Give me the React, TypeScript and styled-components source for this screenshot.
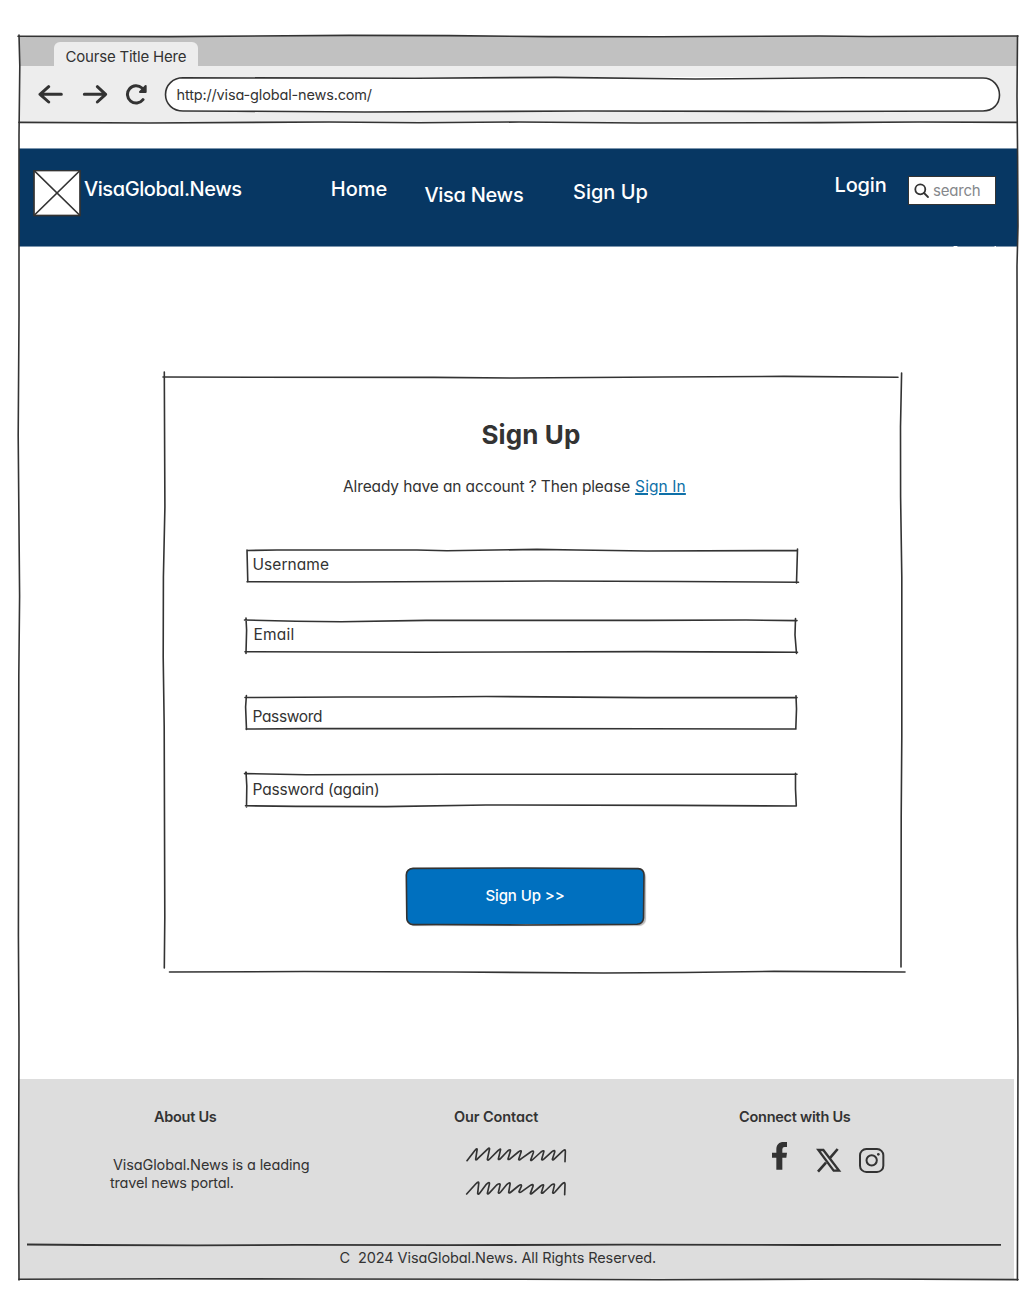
import React from "react";
import styled, { createGlobalStyle } from "styled-components";

const ink = "#333333";

const GlobalStyle = createGlobalStyle`
  * { box-sizing: border-box; }
  body {
    margin: 0;
    background: #ffffff;
    color: ${ink};
    font-family: Inter, "Liberation Sans", sans-serif;
    font-feature-settings: "cv11";
  }
`;

const Page = styled.div`
  width: 1029px;
  height: 1302px;
  padding: 36px 0 0 19px;
  overflow: hidden;
`;

const BrowserWindow = styled.div`
  position: relative;
  width: 999px;
  height: 1244px;
  display: flex;
  flex-direction: column;
`;

/* Hand-drawn outline laid over the box it belongs to. */
const Outline = styled.svg`
  position: absolute;
  inset: 0;
  width: 100%;
  height: 100%;
  overflow: visible;
  pointer-events: none;
  fill: none;
  stroke: ${ink};
  stroke-width: 1.6;
  stroke-linecap: round;
`;

const Text = styled.span<{ $size: number; $weight?: number; $track?: number }>`
  display: block;
  white-space: pre;
  line-height: 20px;
  font-size: ${(p) => p.$size}px;
  font-weight: ${(p) => p.$weight ?? 400};
  letter-spacing: ${(p) => p.$track ?? 0}px;
`;

const TabStrip = styled.div`
  height: 30px;
  padding-left: 35px;
  display: flex;
  align-items: flex-end;
  background: #c1c1c1;
`;

const Tab = styled.div`
  width: 144px;
  height: 24px;
  padding: 4.5px 0 0 11.5px;
  border-radius: 6px 6px 0 0;
  background: #ededed;
`;

const Toolbar = styled.div`
  height: 57px;
  padding: 11px 17px 0 19px;
  display: grid;
  grid-template-columns: 44px 41px 42px 835px;
  background: #ededed;
`;

const ToolIcon = styled.svg`
  width: 26px;
  height: 21px;
  margin-top: 7px;
  fill: none;
  stroke: ${ink};
  stroke-width: 9;
  stroke-linecap: round;
  stroke-linejoin: round;
`;

const AddressBar = styled.div`
  position: relative;
  height: 35px;
  padding: 7.5px 0 0 11.5px;
  border-radius: 18px;
  background: #ffffff;
`;

const Nav = styled.nav`
  height: 99px;
  margin-top: 25px;
  padding-left: 14px;
  display: grid;
  grid-template-columns: 51px 246.8px 93.7px 148.5px 261.5px 73.5px 88px;
  align-items: start;
  border: solid #7c95ad;
  border-width: 1px 0;
  background: #073763;
  color: #ffffff;
`;

const NavLink = styled.div<{ $drop: number }>`
  padding-top: ${(p) => p.$drop}px;
`;

const LogoBox = styled.svg`
  width: 48px;
  height: 47px;
  margin-top: 20.5px;
  fill: #ffffff;
  stroke: ${ink};
  stroke-width: 1.7;
`;

const SearchBox = styled.div`
  position: relative;
  height: 29px;
  margin-top: 27px;
  padding: 4px 0 0 5px;
  display: flex;
  gap: 3px;
  border: 1.5px solid ${ink};
  background: #ffffff;
  color: #85878b;
`;

const SearchIcon = styled.svg`
  width: 16px;
  height: 16px;
  margin-top: 2px;
  fill: none;
  stroke: ${ink};
  stroke-width: 1.8;
  stroke-linecap: round;
`;

const Main = styled.main`
  height: 832px;
  padding: 130px 0 0 145px;
`;

const Card = styled.form`
  position: relative;
  width: 738px;
  height: 595px;
  padding-top: 48px;
  display: flex;
  flex-direction: column;
  align-items: flex-start;
`;

const Title = styled.div`
  margin-left: 317.5px;
`;

const Prompt = styled.div`
  display: flex;
  margin: 32px 0 0 179px;
`;

const TextLink = styled.a`
  display: block;
  margin-left: 5px;
  color: #0e70a8;
  text-decoration: underline;
  text-decoration-thickness: 1.5px;
  text-underline-offset: 1px;
`;

const Field = styled.div<{ $gap: number; $indent: number; $drop: number; $inset: number }>`
  position: relative;
  width: 550px;
  height: 32px;
  margin: ${(p) => p.$gap}px 0 0 ${(p) => p.$indent}px;
  padding: ${(p) => p.$drop}px 0 0 ${(p) => p.$inset}px;
`;

const SubmitButton = styled.div`
  position: relative;
  width: 238px;
  height: 56px;
  margin: 62px 0 0 242px;
  padding-top: 18px;
  display: flex;
  justify-content: center;
  border-radius: 7px;
  background: #0070bf;
  box-shadow: 2px 2px 1px #b9b9b9;
  color: #ffffff;
`;

const Footer = styled.footer`
  width: 995px;
  height: 201px;
  background: #dddddd;
`;

const FooterColumns = styled.div`
  height: 165px;
  padding: 28px 0 0 91px;
  display: grid;
  grid-template-columns: 344px 285px 1fr;
`;

const FooterColumn = styled.section<{ $headIndent?: number }>`
  & > :first-child {
    margin-left: ${(p) => p.$headIndent ?? 0}px;
  }
`;

const About = styled.div`
  margin-top: 29px;

  & > span {
    line-height: 18px;
  }
  & > :first-child {
    margin-left: 3px;
  }
`;

const Scribbles = styled.div`
  display: grid;
  gap: 16px;
  margin: 18px 0 0 11px;
`;

const Scribble = styled.svg`
  display: block;
  width: 103px;
  height: 18px;
  fill: none;
  stroke: ${ink};
  stroke-width: 5;
  stroke-linejoin: round;
  stroke-linecap: round;
`;

const Socials = styled.div`
  display: flex;
  align-items: flex-start;
  margin: 13px 0 0 31px;
`;

const SocialIcon = styled.svg<{ $w: number; $h: number; $left?: number; $top?: number }>`
  width: ${(p) => p.$w}px;
  height: ${(p) => p.$h}px;
  margin: ${(p) => p.$top ?? 0}px 0 0 ${(p) => p.$left ?? 0}px;
  fill: none;
  stroke: ${ink};
  stroke-width: 6;
`;

const Rule = styled.svg`
  display: block;
  width: 974px;
  height: 2px;
  margin-left: 8px;
  overflow: visible;
  fill: none;
  stroke: ${ink};
  stroke-width: 1.8;
`;

const Copyright = styled.div`
  margin: 2px 0 0 320.5px;
`;

const fields = [
  { label: "Username", gap: 53, indent: 83, drop: 5, inset: 5.5, track: 0.05, path: "M0 .5L30 0H170L200 .8L290 -.6L330 0L400 1L550 .5M550.5 -1L549.5 33M551.5 32.3L430 31.5L300 31L100 32L0 31.8M.8 32L0 0" },
  { label: "Email", gap: 38, indent: 82, drop: 5, inset: 7.5, track: 0.2, path: "M-1.5 0L50 1.2L95 1.8L180 .4H400L500 0L551 .6M549.5 -1.5L549 15L550.5 33.5M551.5 32.3L400 31.6L180 32.2L-1 31.8M0 33.5L.6 10L0 -2" },
  { label: "Password", gap: 45, indent: 82, drop: 9.5, inset: 6.5, track: -0.35, path: "M-1 .5L100 0H180L240 -.5L400 .6L551 .6M550 -1.2L550.5 12L549.8 32M550 32L400 31.7L60 31.6L0 32M.5 32.5L-.4 10L.4 -1.5" },
  { label: "Password (again)", gap: 45, indent: 82, drop: 6, inset: 6.5, track: -0.15, path: "M-1.5 -.4L60 .8L200 .2H551M549.5 -.8L549.5 15L550.3 32M550.3 32L430 31.4L240 31L140 32.6L50 32.4L-.5 31.8M.5 33L.8 12L0 -2" },
];

export default function App() {
  return (
    <Page>
      <GlobalStyle />
      <BrowserWindow>
        <TabStrip>
          <Tab><Text $size={15} $track={-0.2}>Course Title Here</Text></Tab>
        </TabStrip>
        <Toolbar>
          <ToolIcon viewBox="24 27 78 63"><path d="M94 58H30M56 35L30 58L56 81" /></ToolIcon>
          <ToolIcon viewBox="156 27 78 63"><path d="M163 58H227M202 35L227 58L202 81" /></ToolIcon>
          <ToolIcon viewBox="279 27 78 63">
            <path d="M339 74A26 26 0 1 1 336 39" />
            <path d="M347 33V51L330 51Z" fill={ink} strokeWidth="6" />
          </ToolIcon>
          <AddressBar>
            <Text $size={14.5} $track={-0.16}>http://visa-global-news.com/</Text>
            <Outline viewBox="0 0 835 35">
              <path d="M18 .8L250 1.2L390 .4L530 2L680 .8L818 1C828 1 834.5 9 834.5 18C834.5 27 828 34 818 34L640 34.5L420 34L200 35L70 34.2L18 34C8 34 .5 27 .5 17.5C.5 8 8 .8 18 .8Z" />
            </Outline>
          </AddressBar>
        </Toolbar>
        <Nav>
          <LogoBox viewBox="0 0 48 47">
            <rect x="1" y=".5" width="46" height="45" />
            <path d="M1 .5L47 45.5M46.500 1L1.500 45" />
          </LogoBox>
          <NavLink $drop={30}><Text $size={20} $weight={500} $track={-0.43}>VisaGlobal.News</Text></NavLink>
          <NavLink $drop={30}><Text $size={20} $weight={500}>Home</Text></NavLink>
          <NavLink $drop={36}><Text $size={20} $weight={500} $track={-0.3}>Visa News</Text></NavLink>
          <NavLink $drop={33}><Text $size={20} $weight={500}>Sign Up</Text></NavLink>
          <NavLink $drop={26}><Text $size={20} $weight={500} $track={-0.15}>Login</Text></NavLink>
          <SearchBox>
            <SearchIcon viewBox="0 0 16 16"><circle cx="6.3" cy="6.3" r="5" /><path d="M10 10L14 14" /></SearchIcon>
            <Text $size={15} $track={-0.2}>search</Text>
          </SearchBox>
        </Nav>
        <Main>
          <Card>
            <Title><Text $size={26} $weight={700} $track={0.1}>Sign Up</Text></Title>
            <Prompt>
              <Text $size={15.5} $track={-0.13}>Already have an account ? Then please</Text>
              <TextLink><Text $size={15.5} $track={0.1}>Sign In</Text></TextLink>
            </Prompt>
            {fields.map((f) => (
              <Field key={f.label} $gap={f.gap} $indent={f.indent} $drop={f.drop} $inset={f.inset}>
                <Text $size={15.5} $track={f.track}>{f.label}</Text>
                <Outline viewBox="0 0 550 32"><path d={f.path} /></Outline>
              </Field>
            ))}
            <SubmitButton>
              <Text $size={15} $weight={500} $track={-0.1}>Sign Up &gt;&gt;</Text>
              <Outline viewBox="0 0 238 56">
                <path d="M7 .4L120 0L232 .6Q238 1 238 7L237.5 50Q237 56 231 56.3L120 57L30 56.5L7 56.6Q1 56 .8 50L.3 7Q.6 1 7 .4Z" />
              </Outline>
            </SubmitButton>
            <Outline viewBox="0 0 738 595">
              <path d="M-1 0L90 .3L270 .4L350 1L500 0L620 -.6L734 .3" />
              <path d="M737.6 -4L736.5 50L736.6 120L737.8 200V360L737.2 440L737 590" />
              <path d="M741 595L610 594.4L520 595.5L440 596L290 595L140 594.5L5.5 595" />
              <path d="M.3 591L.8 540L.2 350L-.8 280L-.6 200L.9 130L.3 -5" />
            </Outline>
          </Card>
        </Main>
        <Footer>
          <FooterColumns>
            <FooterColumn $headIndent={44}>
              <Text $size={14.5} $weight={600} $track={-0.27}>About Us</Text>
              <About>
                <Text $size={14.5} $track={-0.13}>VisaGlobal.News is a leading</Text>
                <Text $size={14.5} $track={-0.2}>travel news portal.</Text>
              </About>
            </FooterColumn>
            <FooterColumn>
              <Text $size={14.5} $weight={600} $track={-0.1}>Our Contact</Text>
              <Scribbles>
                <Scribble viewBox="30 15 309 54">
                  <path d="M36 62L59 32Q68 21 66 31L62 58Q63 62 68 56L97 28Q106 20 103 30L97 58Q98 63 104 57L129 32Q139 23 136 32L130 57Q131 61 137 55L158 33Q168 25 166 34L159 57Q160 61 167 55L190 36Q201 28 198 37L191 58Q192 62 199 56L227 36Q237 29 235 38L227 60Q228 64 235 57L258 36Q269 28 266 37L260 58Q261 62 268 56L291 35Q301 28 299 37L292 58Q293 62 299 56L322 34Q332 25 331 35L330 65" />
                </Scribble>
                <Scribble viewBox="30 117 309 54">
                  <path d="M35 162L62 132Q73 121 71 132L68 160Q69 166 75 158L94 133Q105 122 103 133L97 160Q98 164 104 158L125 135Q137 127 135 136L130 158Q131 162 137 156L156 133Q167 124 165 134L161 157Q162 161 168 156L190 138Q201 130 199 139L192 155Q193 160 200 155L225 137Q236 130 234 139L226 160Q227 165 234 158L257 138Q268 130 265 139L259 158Q260 162 267 156L289 135Q300 128 298 137L293 158Q294 162 300 156L320 133Q331 122 330 134L329 164" />
                </Scribble>
              </Scribbles>
            </FooterColumn>
            <FooterColumn>
              <Text $size={14.5} $weight={600} $track={-0.25}>Connect with Us</Text>
              <Socials>
                <SocialIcon viewBox="270 240 60 93" $w={20} $h={31}>
                  <path fill={ink} stroke="none" d="M289 329H307V293H319L321 278H307V268Q307 261 314 261H321V246H311C297 246 289 254 289 268V278H276V293H289Z" />
                </SocialIcon>
                <SocialIcon viewBox="405 261 84 81" $w={28} $h={27} $left={25} $top={7}>
                  <path strokeWidth="7" d="M415 270H430L477 332H461Z" />
                  <path strokeWidth="8" d="M473 267L449 295M438 308L414 335" />
                </SocialIcon>
                <SocialIcon viewBox="534 261 81 81" $w={27} $h={27} $left={15} $top={7}>
                  <rect x="540" y="267" width="70" height="69" rx="19" />
                  <circle cx="575" cy="301" r="15.5" />
                  <circle cx="595" cy="283" r="4" fill={ink} stroke="none" />
                </SocialIcon>
              </Socials>
            </FooterColumn>
          </FooterColumns>
          <Rule viewBox="0 0 974 2"><path d="M0 .5L60 1L170 1.4L270 .8L420 1.2L600 .6L780 1L974 .9" /></Rule>
          <Copyright><Text $size={14.5} $track={-0.09}>C  2024 VisaGlobal.News. All Rights Reserved.</Text></Copyright>
        </Footer>
        <Outline viewBox="0 0 999 1244">
          <path d="M-1 .2L150 .6L330 -.6L430 -.4L530 .6L640 .8L800 0L850 .5L999 0" />
          <path d="M998.5 0L998 60L998.6 120L999 190L998 230L998.5 600L998.3 900L999 1020L998.4 1244" />
          <path d="M999 1243.6L850 1243L640 1243.8L500 1243.2L300 1243L150 1242.7L0 1243.3" />
          <path d="M0 1244L-.4 1150L0 1000L-.6 900L-.2 640L.6 560L-.8 400L0 280L0 100L.8 30L0 -1" />
          <path d="M0 86.4L130 87L310 86L400 86.8L500 86L620 87L800 86.6L900 86L998 86.4" />
          <path stroke="#ffffff" strokeWidth="1" d="M935 210.5H938M976 210.5H976.5" />
        </Outline>
      </BrowserWindow>
    </Page>
  );
}
